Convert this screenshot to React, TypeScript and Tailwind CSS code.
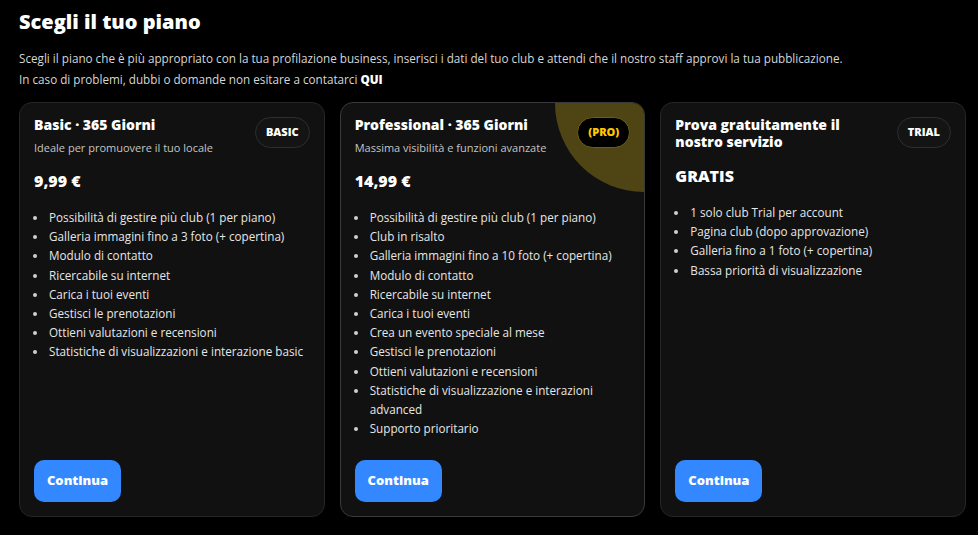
import React from "react";

type Plan = {
  title: string;
  subtitle?: string;
  price: string;
  badge: string;
  pro?: boolean;
  features: string[];
};

const plans: Plan[] = [
  {
    title: "Basic · 365 Giorni",
    subtitle: "Ideale per promuovere il tuo locale",
    price: "9,99 €",
    badge: "BASIC",
    features: [
      "Possibilità di gestire più club (1 per piano)",
      "Galleria immagini fino a 3 foto (+ copertina)",
      "Modulo di contatto",
      "Ricercabile su internet",
      "Carica i tuoi eventi",
      "Gestisci le prenotazioni",
      "Ottieni valutazioni e recensioni",
      "Statistiche di visualizzazioni e interazione basic",
    ],
  },
  {
    title: "Professional · 365 Giorni",
    subtitle: "Massima visibilità e funzioni avanzate",
    price: "14,99 €",
    badge: "(PRO)",
    pro: true,
    features: [
      "Possibilità di gestire più club (1 per piano)",
      "Club in risalto",
      "Galleria immagini fino a 10 foto (+ copertina)",
      "Modulo di contatto",
      "Ricercabile su internet",
      "Carica i tuoi eventi",
      "Crea un evento speciale al mese",
      "Gestisci le prenotazioni",
      "Ottieni valutazioni e recensioni",
      "Statistiche di visualizzazione e interazioni advanced",
      "Supporto prioritario",
    ],
  },
  {
    title: "Prova gratuitamente il nostro servizio",
    price: "GRATIS",
    badge: "TRIAL",
    features: [
      "1 solo club Trial per account",
      "Pagina club (dopo approvazione)",
      "Galleria fino a 1 foto (+ copertina)",
      "Bassa priorità di visualizzazione",
    ],
  },
];

function PlanCard({ plan }: { plan: Plan }) {
  return (
    <div
      className={`relative overflow-hidden flex flex-col rounded-[13px] bg-[#111111] border px-[14px] pt-[13px] pb-[14px] ${
        plan.pro ? "border-[#3a3a3a]" : "border-[#262626]"
      }`}
    >
      {plan.pro && (
        <div className="absolute -top-[89px] -right-[89px] w-[178px] h-[178px] rounded-full bg-[#4f4514]" />
      )}
      <div className="relative flex items-start justify-between gap-3">
        <div className="flex-1">
          <h2 className="text-[14px] leading-[17px] font-extrabold text-white max-w-[190px]">{plan.title}</h2>
          {plan.subtitle && (
            <p className="mt-[8px] text-[11px] leading-[14px] text-[#c4c4c4]">{plan.subtitle}</p>
          )}
        </div>
        <span
          className={`mt-[1px] h-[31px] px-[10px] flex items-center rounded-full text-[11px] font-extrabold ${
            plan.pro
              ? "bg-black border border-[#6f5f10] text-[#ffc800]"
              : "bg-[#141414] border border-[#2e2e2e] text-white"
          }`}
        >
          {plan.badge}
        </span>
      </div>
      <p
        className={`relative text-[16px] leading-[20px] font-extrabold text-white ${
          plan.subtitle ? "mt-[16px]" : "mt-[16px]"
        }`}
      >
        {plan.price}
      </p>
      <ul className="relative mt-[17px] list-disc pl-[14px] text-[11.7px] leading-[19.2px] text-[#e6e6e6] marker:text-[#d0d0d0]">
        {plan.features.map((f) => (
          <li key={f} className="pl-[1px]">{f}</li>
        ))}
      </ul>
      <div className="mt-auto pt-5">
        <button className="h-[42px] w-[87px] rounded-[10px] bg-[#3388ff] text-white text-[13px] font-extrabold">
          Continua
        </button>
      </div>
    </div>
  );
}

export default function App() {
  return (
    <div
      className="min-h-screen w-full bg-black text-white pl-[19px] pr-[12px] pt-[8px] pb-[18px]"
      style={{ fontFamily: '"Open Sans", "Noto Sans", sans-serif' }}
    >
      <h1 className="text-[20px] leading-[28px] font-extrabold text-white">Scegli il tuo piano</h1>
      <p className="mt-[12px] text-[11.7px] leading-[21px] text-[#d6d6d6]">
        Scegli il piano che è più appropriato con la tua profilazione business, inserisci i dati del tuo club e attendi che il nostro staff approvi la tua pubblicazione.
      </p>
      <p className="text-[11.7px] leading-[21px] text-[#d6d6d6]">
        In caso di problemi, dubbi o domande non esitare a contatarci <span className="font-extrabold text-white">QUI</span>
      </p>
      <div className="mt-[12px] grid grid-cols-3 gap-[15px] h-[415px]">
        {plans.map((p) => (
          <PlanCard key={p.badge} plan={p} />
        ))}
      </div>
    </div>
  );
}
